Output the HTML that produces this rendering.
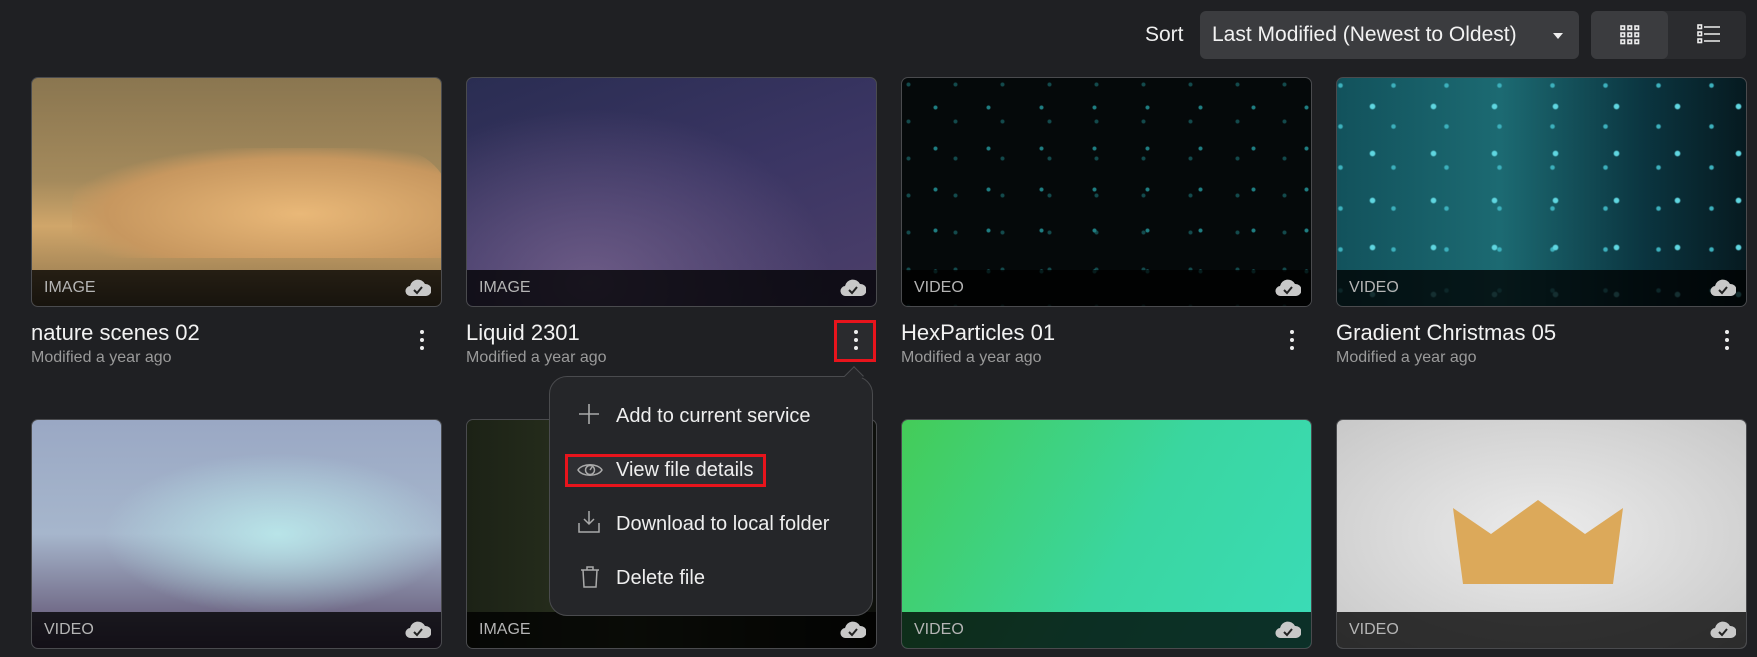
<!DOCTYPE html>
<html><head><style>
*{box-sizing:border-box;margin:0;padding:0}
body{width:1757px;height:657px;background:#1f2023;font-family:"Liberation Sans",sans-serif;color:#fff;position:relative;overflow:hidden}
.a{position:absolute}
.card{position:absolute;width:411px;height:230px;border:1px solid #4a4b4e;border-radius:7px;overflow:hidden}
.bar{position:absolute;left:0;right:0;bottom:0;height:36px;background:rgba(0,0,0,.78);color:#b5b5b5;font-size:16px;padding:9px 0 0 12px}
.cl{position:absolute;right:10px;bottom:9px}
.t{position:absolute;font-size:22px;color:#f2f2f2}
.m{position:absolute;font-size:16px;color:#9a9a9a}
.k{position:absolute;width:6px}
.k i{display:block;width:4px;height:4px;border-radius:2px;background:#eee;margin:0 0 4px 1px}
.mi{position:absolute;left:616px;font-size:20px;color:#eee}
</style></head><body>
<div class="a" style="left:1145px;top:23px;font-size:21px;color:#eee">Sort</div>
<div class="a" style="left:1200px;top:11px;width:379px;height:48px;background:#3b3c3f;border-radius:6px;font-size:21px;padding:12px 0 0 12px;color:#f2f2f2">Last Modified (Newest to Oldest)<span class="a" style="right:16px;top:22px;border:5px solid transparent;border-top:6px solid #eee"></span></div>
<div class="a" style="left:1591px;top:11px;width:155px;height:48px;background:#2b2c2f;border-radius:6px"></div>
<div class="a" style="left:1591px;top:11px;width:77px;height:48px;background:#3b3c3f;border-radius:6px"></div>
<svg class="a" style="left:1620px;top:25px" width="20" height="20" fill="none" stroke="#eee" stroke-width="1.6"><g><rect x="1" y="1" width="3.5" height="3.5"/><rect x="8" y="1" width="3.5" height="3.5"/><rect x="15" y="1" width="3.5" height="3.5"/><rect x="1" y="8" width="3.5" height="3.5"/><rect x="8" y="8" width="3.5" height="3.5"/><rect x="15" y="8" width="3.5" height="3.5"/><rect x="1" y="15" width="3.5" height="3.5"/><rect x="8" y="15" width="3.5" height="3.5"/><rect x="15" y="15" width="3.5" height="3.5"/></g></svg>
<svg class="a" style="left:1697px;top:24px" width="24" height="20" fill="none" stroke="#eee" stroke-width="1.6"><rect x="1" y="1" width="3.5" height="3.5"/><rect x="1" y="8" width="3.5" height="3.5"/><rect x="1" y="15" width="3.5" height="3.5"/><path d="M7 3H23M7 10H23M7 17H23"/></svg>

<!-- row 1 -->
<div class="card" style="left:31px;top:77px;background:linear-gradient(180deg,#8a7650 0%,#a48a5c 45%,#d0a66a 65%,#a88858 85%,#6a5a40 100%)"><div class="a" style="left:40px;top:70px;width:380px;height:110px;border-radius:60px 60px 0 0;background:radial-gradient(ellipse at 60% 60%,#e9b878,#c7975f 60%,transparent 75%)"></div><div class="bar">IMAGE</div></div>
<div class="card" style="left:466px;top:77px;background:radial-gradient(ellipse at 30% 90%,#6c5b86,transparent 60%),linear-gradient(160deg,#2a2d52,#3a3563 50%,#4c3f6a)"><div class="bar">IMAGE</div></div>
<div class="card" style="left:901px;top:77px;background:radial-gradient(circle,#1f7e82 1.5px,transparent 2.5px) 7px 9px/53px 41px,radial-gradient(circle,#134a4c 1.5px,transparent 2.5px) 30px 25px/47px 37px,#05090a"><div class="bar">VIDEO</div></div>
<div class="card" style="left:1336px;top:77px;background:radial-gradient(circle,#5fd6e0 2px,transparent 3.5px) 5px 5px/61px 47px,radial-gradient(circle,#3cb0bc 1.5px,transparent 3px) 30px 28px/53px 41px,linear-gradient(90deg,#12525c,#1c6a72 40%,#0b3540 75%,#061a20)"><div class="bar">VIDEO</div></div>

<div class="t" style="left:31px;top:320px">nature scenes 02</div><div class="m" style="left:31px;top:349px">Modified a year ago</div>
<div class="t" style="left:466px;top:320px">Liquid 2301</div><div class="m" style="left:466px;top:349px">Modified a year ago</div>
<div class="t" style="left:901px;top:320px">HexParticles 01</div><div class="m" style="left:901px;top:349px">Modified a year ago</div>
<div class="t" style="left:1336px;top:320px">Gradient Christmas 05</div><div class="m" style="left:1336px;top:349px">Modified a year ago</div>
<div class="k" style="left:419px;top:330px"><i></i><i></i><i></i></div>
<div class="a" style="left:834px;top:320px;width:42px;height:42px;border:3px solid #e8141c;background:#2a2b2e"></div>
<div class="k" style="left:853px;top:330px"><i></i><i></i><i></i></div>
<div class="k" style="left:1289px;top:330px"><i></i><i></i><i></i></div>
<div class="k" style="left:1724px;top:330px"><i></i><i></i><i></i></div>

<!-- row 2 -->
<div class="card" style="left:31px;top:419px;background:radial-gradient(ellipse at 60% 50%,#b8e4e8,transparent 50%),linear-gradient(180deg,#9aa8c4,#a6b6cc 50%,#5a4a6a)"><div class="bar">VIDEO</div></div>
<div class="card" style="left:466px;top:419px;background:linear-gradient(90deg,#1c2216,#2c3420 40%,#0e100c)"><div class="bar">IMAGE</div></div>
<div class="card" style="left:901px;top:419px;background:linear-gradient(120deg,#44cc58,#3ad6a0 55%,#3adcb8)"><div class="bar">VIDEO</div></div>
<div class="card" style="left:1336px;top:419px;background:radial-gradient(ellipse,#ececec,#c8c8c8)"><svg class="a" style="left:116px;top:80px" width="170" height="84"><path d="M0 8L38 34L85 0L132 34L170 8L160 84H10Z" fill="#dca95a"/></svg><div class="bar">VIDEO</div></div>

<!-- menu -->
<div class="a" style="left:549px;top:376px;width:324px;height:240px;background:#252629;border:1px solid #4a4b4e;border-radius:18px"></div>
<div class="a" style="left:847px;top:369px;width:14px;height:14px;background:#252629;border-left:1px solid #4a4b4e;border-top:1px solid #4a4b4e;transform:rotate(45deg)"></div>
<svg class="a" style="left:578px;top:403px" width="22" height="22" stroke="#aaa" stroke-width="1.6"><path d="M11 1V21M1 11H21"/></svg>
<div class="mi" style="top:405px">Add to current service</div>
<div class="a" style="left:565px;top:454px;width:201px;height:33px;border:3px solid #e8141c;background:#2e2f33"></div>
<svg class="a" style="left:577px;top:460px" width="26" height="20" fill="none" stroke="#aaa" stroke-width="1.5"><path d="M1 10C5 3 21 3 25 10C21 17 5 17 1 10Z"/><circle cx="13" cy="10" r="4.5"/><path d="M13 10L15 7"/></svg>
<div class="mi" style="top:459px">View file details</div>
<svg class="a" style="left:578px;top:510px" width="22" height="24" fill="none" stroke="#aaa" stroke-width="1.5"><path d="M11 1V14M6 9L11 14L16 9M1 13V22H21V13"/></svg>
<div class="mi" style="top:513px">Download to local folder</div>
<svg class="a" style="left:580px;top:566px" width="20" height="22" fill="none" stroke="#aaa" stroke-width="1.5"><path d="M1 4H19M7 4V1H13V4M3 4L4 21H16L17 4"/></svg>
<div class="mi" style="top:567px">Delete file</div>
<script>
document.querySelectorAll('.bar').forEach(b=>{b.insertAdjacentHTML('beforeend','<svg class="cl" width="26" height="20"><path d="M6 19A5 5 0 0 1 5 9A8 8 0 0 1 20 7A6 6 0 0 1 21 19Z" fill="#c8c8c8"/><path d="M9 13L12 16L17 10" stroke="#222" stroke-width="2" fill="none"/></svg>')});
</script>
</body></html>
